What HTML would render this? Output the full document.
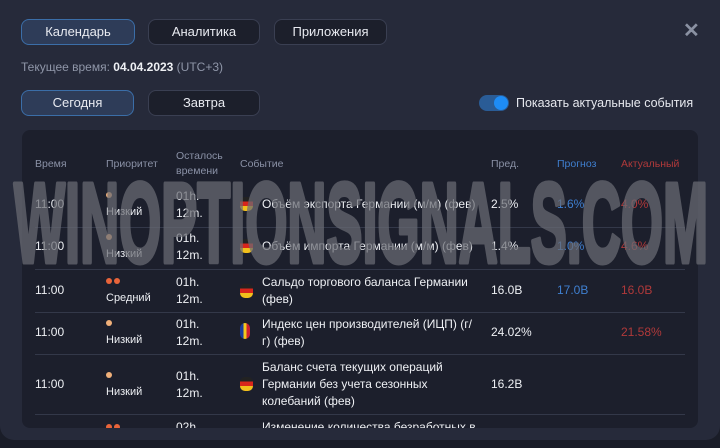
<!DOCTYPE html>
<html><head><meta charset="utf-8"><style>
*{margin:0;padding:0;box-sizing:border-box}
body{width:720px;height:448px;background:#1a1d28;font-family:"Liberation Sans","Noto Sans CJK SC",sans-serif;color:#e6e8ee;overflow:hidden;position:relative}
.outer{position:absolute;left:0;top:0;width:720px;height:440px;background:#262a3a;border-radius:0 0 14px 14px}
.btn{position:absolute;height:26px;border-radius:8px;border:1px solid #3a3f52;background:#1c1f2b;font-size:13px;color:#e8eaf0;text-align:center;line-height:24px}
.btn.act{background:#2e3c58;border:1px solid #3b6ea8}
.t{position:absolute;font-size:12px;white-space:nowrap}
.panel{position:absolute;left:22px;top:130px;width:676px;height:298px;background:#1c1f2c;border-radius:8px;overflow:hidden}
.h{position:absolute;font-size:10.5px;color:#8a91a6;line-height:15px}
.c{position:absolute;font-size:12px;line-height:17px;color:#eef0f4;white-space:nowrap}
.line{position:absolute;left:13px;width:650px;height:1px;background:#333849}
.dot{display:inline-block;width:6px;height:6px;border-radius:3px;background:#f0b07a;margin-right:2px}
.dot.o{background:#e8643a}
.flag{position:absolute;width:13px;height:14px;border-radius:5px;overflow:hidden}
</style></head><body>
<div class="outer"></div>
<div class="btn act" style="left:21px;top:19px;width:114px">Календарь</div>
<div class="btn" style="left:148px;top:19px;width:112px">Аналитика</div>
<div class="btn" style="left:274px;top:19px;width:113px">Приложения</div>
<div class="t" style="left:683px;top:18px;font-size:20px;font-weight:bold;color:#8a91a2">✕</div>
<div class="t" style="left:21px;top:60px;color:#8f96a8">Текущее время: <b style="color:#eef0f4;font-weight:bold">04.04.2023</b> (UTC+3)</div>
<div class="btn act" style="left:21px;top:90px;width:113px">Сегодня</div>
<div class="btn" style="left:148px;top:90px;width:112px">Завтра</div>
<div style="position:absolute;left:479px;top:95px;width:30px;height:16px;border-radius:8px;background:#2a5c96"></div>
<div style="position:absolute;left:494px;top:96px;width:14px;height:14px;border-radius:7px;background:#1e8cf5"></div>
<div class="t" style="left:516px;top:96px;font-size:12.5px">Показать актуальные события</div>
<div class="panel">
<div class="h" style="left:13px;top:27px">Время</div>
<div class="h" style="left:84px;top:27px">Приоритет</div>
<div class="h" style="left:154px;top:19px">Осталось<br>времени</div>
<div class="h" style="left:218px;top:27px">Событие</div>
<div class="h" style="left:469px;top:27px">Пред.</div>
<div class="h" style="left:535px;top:27px;color:#3f7fd0">Прогноз</div>
<div class="h" style="left:599px;top:27px;color:#b0393a">Актуальный</div>

<div class="c" style="left:13px;top:66px">11:00</div>
<div class="c" style="left:84px;top:57px;font-size:11px"><span class="dot"></span><br>Низкий</div>
<div class="c" style="left:154px;top:58px">01h.<br>12m.</div>
<div class="flag" style="left:218px;top:67px;background:linear-gradient(#222 33%,#d8261c 33% 66%,#f2c01c 66%)"></div>
<div class="c" style="left:240px;top:66px">Объём экспорта Германии (м/м) (фев)</div>
<div class="c" style="left:469px;top:66px">2.5%</div>
<div class="c" style="left:535px;top:66px;color:#3f7fd0">1.6%</div>
<div class="c" style="left:599px;top:66px;color:#b0393a">4.0%</div>
<div class="line" style="top:97px"></div>

<div class="c" style="left:13px;top:108px">11:00</div>
<div class="c" style="left:84px;top:99px;font-size:11px"><span class="dot"></span><br>Низкий</div>
<div class="c" style="left:154px;top:100px">01h.<br>12m.</div>
<div class="flag" style="left:218px;top:109px;background:linear-gradient(#222 33%,#d8261c 33% 66%,#f2c01c 66%)"></div>
<div class="c" style="left:240px;top:108px">Объём импорта Германии (м/м) (фев)</div>
<div class="c" style="left:469px;top:108px">1.4%</div>
<div class="c" style="left:535px;top:108px;color:#3f7fd0">1.0%</div>
<div class="c" style="left:599px;top:108px;color:#b0393a">4.6%</div>
<div class="line" style="top:139px"></div>

<div class="c" style="left:13px;top:152px">11:00</div>
<div class="c" style="left:84px;top:143px;font-size:11px"><span class="dot o"></span><span class="dot o"></span><br>Средний</div>
<div class="c" style="left:154px;top:144px">01h.<br>12m.</div>
<div class="flag" style="left:218px;top:154px;background:linear-gradient(#222 33%,#d8261c 33% 66%,#f2c01c 66%)"></div>
<div class="c" style="left:240px;top:144px">Сальдо торгового баланса Германии<br>(фев)</div>
<div class="c" style="left:469px;top:152px">16.0B</div>
<div class="c" style="left:535px;top:152px;color:#3f7fd0">17.0B</div>
<div class="c" style="left:599px;top:152px;color:#b0393a">16.0B</div>
<div class="line" style="top:182px"></div>

<div class="c" style="left:13px;top:194px">11:00</div>
<div class="c" style="left:84px;top:185px;font-size:11px"><span class="dot"></span><br>Низкий</div>
<div class="c" style="left:154px;top:186px">01h.<br>12m.</div>
<div class="flag" style="left:218px;top:193px;width:10px;height:16px;background:linear-gradient(90deg,#1a3c9a 33%,#f2c81c 33% 66%,#cf2030 66%)"></div>
<div class="c" style="left:240px;top:186px">Индекс цен производителей (ИЦП) (г/<br>г) (фев)</div>
<div class="c" style="left:469px;top:194px">24.02%</div>
<div class="c" style="left:599px;top:194px;color:#b0393a">21.58%</div>
<div class="line" style="top:224px"></div>

<div class="c" style="left:13px;top:246px">11:00</div>
<div class="c" style="left:84px;top:237px;font-size:11px"><span class="dot"></span><br>Низкий</div>
<div class="c" style="left:154px;top:238px">01h.<br>12m.</div>
<div class="flag" style="left:218px;top:247px;background:linear-gradient(#222 33%,#d8261c 33% 66%,#f2c01c 66%)"></div>
<div class="c" style="left:240px;top:229px">Баланс счета текущих операций<br>Германии без учета сезонных<br>колебаний (фев)</div>
<div class="c" style="left:469px;top:246px">16.2B</div>
<div class="line" style="top:284px"></div>

<div class="c" style="left:84px;top:289px;font-size:11px"><span class="dot o"></span><span class="dot o"></span></div>
<div class="c" style="left:154px;top:289px">02h.</div>
<div class="c" style="left:240px;top:289px">Изменение количества безработных в</div>
</div>
<svg style="position:absolute;left:0;top:0" width="720" height="448">
<g opacity="0.72">
<text x="14" y="262" textLength="694" lengthAdjust="spacingAndGlyphs" font-family="Liberation Sans, sans-serif" font-weight="bold" font-size="113" fill="#6a6c74" stroke="#6a6c74" stroke-width="5" stroke-linejoin="round">WINOPTIONSIGNALS.COM</text>
</g>
</svg>
</body></html>
